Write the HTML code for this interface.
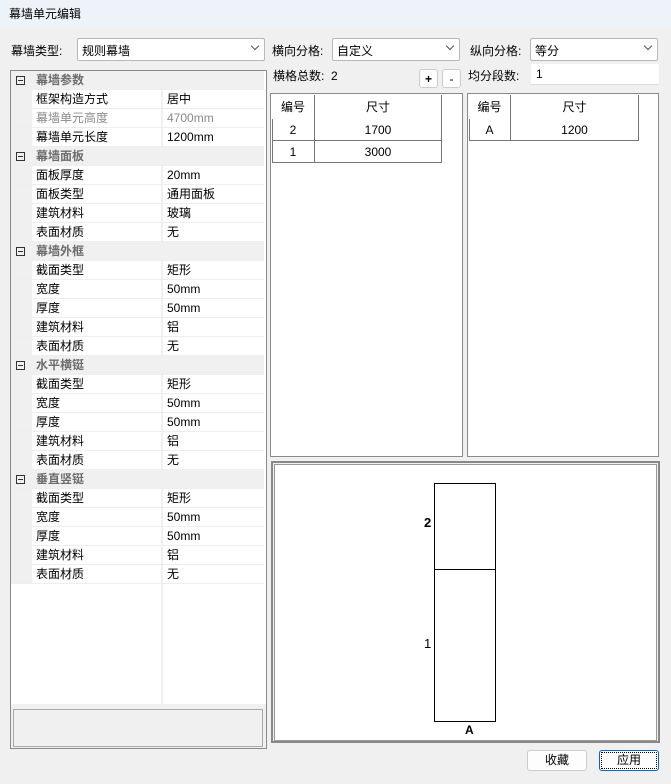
<!DOCTYPE html>
<html><head><meta charset="utf-8"><style>
*{margin:0;padding:0;box-sizing:border-box}
body{width:671px;height:784px;background:#f0f0f0;font-family:"Liberation Sans","Noto Sans CJK SC",sans-serif;font-size:12px;color:#000;position:relative;overflow:hidden}
.a{position:absolute}
.title{left:0;top:0;width:671px;height:28px;background:#eef2f9;}
.title span{position:absolute;left:9px;top:5px;font-size:12px}
.sel{background:#fff;border:1px solid #b8b8b8;border-radius:2px;height:23px}
.sel span{position:absolute;left:4px;top:3px}
.sel i{position:absolute;right:6px;top:4px;width:6px;height:6px;border-right:1px solid #555;border-bottom:1px solid #555;transform:rotate(45deg)}
.grid{left:10px;top:70px;width:257px;height:679px;border:1px solid #8a8a8a;background:#fff}
.row{position:absolute;left:0;width:253px;height:19px;border-bottom:1px solid #eee}
.row .k{position:absolute;left:21px;top:0;width:129px;height:18px;background:#fff;padding-left:4px;line-height:18px}
.row .v{position:absolute;left:150px;top:0;width:103px;height:18px;background:#fff;border-left:2px solid #f0f0f0;padding-left:4px;line-height:18px}
.row.g{background:#f0f0f0}
.row.g b{position:absolute;left:25px;top:0;line-height:19px;color:#6d6d6d;font-weight:bold}
.row.g .box{position:absolute;left:5px;top:5px;width:9px;height:9px;border:1px solid #333}
.row.g .box:after{content:"";position:absolute;left:1px;top:3px;width:5px;height:1px;background:#333}
.gutter{position:absolute;left:0;top:0;width:21px;height:513px;background:#f0f0f0}
.tbl{background:#fff;border:1px solid #8a8a8a}
.c{position:absolute;text-align:center;height:22px;line-height:22px;border-right:1px solid #777;border-bottom:1px solid #777}
.btn{background:#fdfdfd;border:1px solid #ccc;border-radius:3px;text-align:center;line-height:19px}
</style></head><body>
<div class="a title"><span>幕墙单元编辑</span></div>

<div class="a" style="left:11px;top:42px">幕墙类型:</div>
<div class="a sel" style="left:77px;top:38px;width:188px"><span>规则幕墙</span><i></i></div>

<div class="a grid">
<div class="gutter"></div>
<div id="rows"></div>
<div class="a" style="left:150px;top:513px;width:2px;height:120px;background:#f0f0f0"></div>
<div class="a" style="left:0;top:633px;width:255px;height:44px;background:#f0f0f0"></div>
<div class="a" style="left:2px;top:638px;width:250px;height:38px;border:1px solid #aaa;background:#f0f0f0"></div>
</div>

<div class="a" style="left:272px;top:42px">横向分格:</div>
<div class="a sel" style="left:332px;top:38px;width:128px"><span>自定义</span><i></i></div>
<div class="a" style="left:470px;top:42px">纵向分格:</div>
<div class="a sel" style="left:530px;top:38px;width:128px"><span>等分</span><i></i></div>
<div class="a" style="left:273px;top:67px">横格总数:&nbsp; 2</div>
<div class="a btn" style="left:419px;top:69px;width:19px;height:19px;font-weight:bold">+</div>
<div class="a btn" style="left:442px;top:69px;width:19px;height:19px">-</div>
<div class="a" style="left:468px;top:67px">均分段数:</div>
<div class="a" style="left:531px;top:64px;width:128px;height:21px;background:#fff;border-bottom:1px solid #ddd;padding:3px 5px">1</div>

<div class="a tbl" style="left:270px;top:93px;width:193px;height:364px">
<div class="c" style="left:1px;top:1px;width:43px;height:24px;line-height:24px;border-bottom:none">编号</div>
<div class="c" style="left:44px;top:1px;width:127px;height:24px;line-height:24px;border-bottom:none">尺寸</div>
<div class="c" style="left:1px;top:25px;width:43px">2</div>
<div class="c" style="left:44px;top:25px;width:127px">1700</div>
<div class="c" style="left:1px;top:47px;width:43px">1</div>
<div class="c" style="left:44px;top:47px;width:127px">3000</div>
<div class="a" style="left:1px;top:25px;width:1px;height:44px;background:#777"></div>
</div>
<div class="a tbl" style="left:467px;top:93px;width:192px;height:364px">
<div class="c" style="left:1px;top:1px;width:42px;height:24px;line-height:24px;border-bottom:none">编号</div>
<div class="c" style="left:43px;top:1px;width:128px;height:24px;line-height:24px;border-bottom:none">尺寸</div>
<div class="c" style="left:1px;top:25px;width:42px">A</div>
<div class="c" style="left:43px;top:25px;width:128px">1200</div>
<div class="a" style="left:1px;top:25px;width:1px;height:22px;background:#777"></div>
</div>

<div class="a" style="left:271px;top:461px;width:389px;height:282px;border:2px solid #888;background:#f0f0f0">
<div class="a" style="left:1px;top:1px;width:383px;height:277px;border:1px solid #999;background:#fff"></div>
</div>
<div class="a" style="left:434px;top:483px;width:62px;height:239px;border:1px solid #000"></div>
<div class="a" style="left:434px;top:569px;width:62px;height:1px;background:#000"></div>
<div class="a" style="left:424px;top:515px;font-size:13px;font-weight:bold">2</div>
<div class="a" style="left:424px;top:636px;font-size:13px">1</div>
<div class="a" style="left:465px;top:723px;font-size:12px;font-weight:bold">A</div>

<div class="a btn" style="left:527px;top:750px;width:60px;height:21px">收藏</div>
<div class="a btn" style="left:599px;top:750px;width:60px;height:21px;border:1px solid #0a64c8;outline:1px dotted #000;outline-offset:-3px">应用</div>

<script>
var d=[["G","幕墙参数"],["框架构造方式","居中"],["幕墙单元高度","4700mm",1],["幕墙单元长度","1200mm"],
["G","幕墙面板"],["面板厚度","20mm"],["面板类型","通用面板"],["建筑材料","玻璃"],["表面材质","无"],
["G","幕墙外框"],["截面类型","矩形"],["宽度","50mm"],["厚度","50mm"],["建筑材料","铝"],["表面材质","无"],
["G","水平横铤"],["截面类型","矩形"],["宽度","50mm"],["厚度","50mm"],["建筑材料","铝"],["表面材质","无"],
["G","垂直竖铤"],["截面类型","矩形"],["宽度","50mm"],["厚度","50mm"],["建筑材料","铝"],["表面材质","无"]];
var h="";d.forEach(function(r,i){var t=i*19;
if(r[0]=="G")h+='<div class="row g" style="top:'+t+'px"><div class="box"></div><b>'+r[1]+'</b></div>';
else h+='<div class="row" style="top:'+t+'px"><div class="k"'+(r[2]?' style="color:#8a8a8a"':'')+'>'+r[0]+'</div><div class="v"'+(r[2]?' style="color:#8a8a8a"':'')+'>'+r[1]+'</div></div>';});
document.getElementById("rows").innerHTML=h;
</script>
</body></html>
